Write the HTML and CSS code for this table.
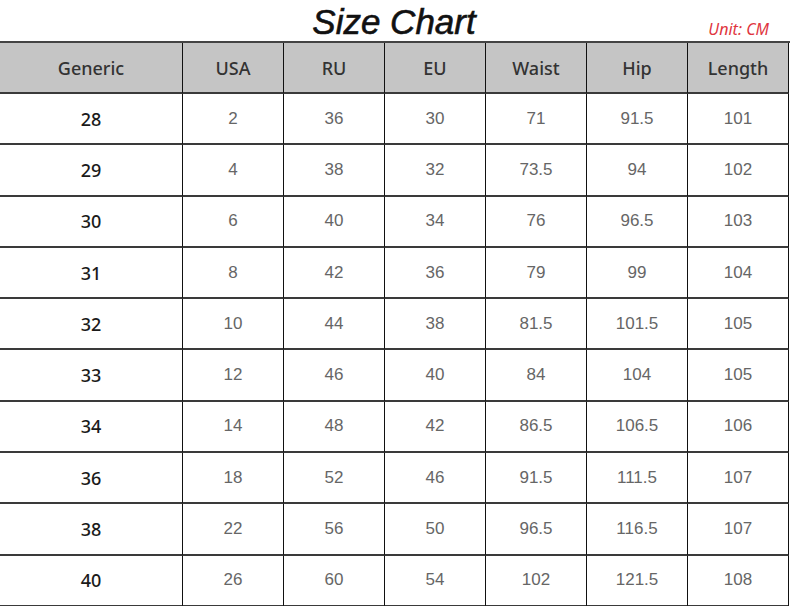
FILE: index.html
```html
<!DOCTYPE html>
<html>
<head>
<meta charset="utf-8">
<link rel="stylesheet" href="styles.css">
</head>
<body>
<div class="chart">
  <div class="title-row">
    <span class="title">Size Chart</span>
    <span class="unit">Unit: CM</span>
  </div>
  <div class="grid">
    <div class="h">Generic</div><div class="h">USA</div><div class="h">RU</div><div class="h">EU</div><div class="h">Waist</div><div class="h">Hip</div><div class="h">Length</div>
    <div class="g">28</div><div class="c">2</div><div class="c">36</div><div class="c">30</div><div class="c">71</div><div class="c">91.5</div><div class="c">101</div>
    <div class="g">29</div><div class="c">4</div><div class="c">38</div><div class="c">32</div><div class="c">73.5</div><div class="c">94</div><div class="c">102</div>
    <div class="g">30</div><div class="c">6</div><div class="c">40</div><div class="c">34</div><div class="c">76</div><div class="c">96.5</div><div class="c">103</div>
    <div class="g">31</div><div class="c">8</div><div class="c">42</div><div class="c">36</div><div class="c">79</div><div class="c">99</div><div class="c">104</div>
    <div class="g">32</div><div class="c">10</div><div class="c">44</div><div class="c">38</div><div class="c">81.5</div><div class="c">101.5</div><div class="c">105</div>
    <div class="g">33</div><div class="c">12</div><div class="c">46</div><div class="c">40</div><div class="c">84</div><div class="c">104</div><div class="c">105</div>
    <div class="g">34</div><div class="c">14</div><div class="c">48</div><div class="c">42</div><div class="c">86.5</div><div class="c">106.5</div><div class="c">106</div>
    <div class="g">36</div><div class="c">18</div><div class="c">52</div><div class="c">46</div><div class="c">91.5</div><div class="c">111.5</div><div class="c">107</div>
    <div class="g">38</div><div class="c">22</div><div class="c">56</div><div class="c">50</div><div class="c">96.5</div><div class="c">116.5</div><div class="c">107</div>
    <div class="g">40</div><div class="c">26</div><div class="c">60</div><div class="c">54</div><div class="c">102</div><div class="c">121.5</div><div class="c">108</div>
  </div>
</div>
</body>
</html>
```
FILE: styles.css
```css
html, body {
  margin: 0;
  padding: 0;
  background: #fff;
}
.chart {
  width: 790px;
  height: 606px;
  font-family: "Noto Sans", "Open Sans", sans-serif;
}
.title-row {
  height: 41px;
  box-sizing: border-box;
  display: flex;
  align-items: flex-start;
  justify-content: center;
  padding-top: 3px;
  padding-right: 2px;
  position: relative;
}
.title {
  font-family: "Liberation Sans", Arial, sans-serif;
  font-style: italic;
  font-size: 35px;
  line-height: 37px;
  color: #111;
  -webkit-text-stroke: 0.6px #111;
}
.unit {
  position: absolute;
  right: 21px;
  bottom: 1px;
  font-family: "Noto Sans", sans-serif;
  font-style: italic;
  font-size: 16px;
  color: #e03540;
}
.grid {
  display: grid;
  grid-template-columns: 183px repeat(6, 101px);
  grid-template-rows: 51px repeat(10, 51.3px);
  border-top: 2px solid #444;
  box-sizing: border-box;
  width: 790px;
}
.grid > div {
  display: flex;
  align-items: center;
  justify-content: center;
  border-right: 1px solid #111;
  border-bottom: 2px solid #3a3a3a;
  box-sizing: border-box;
}
.h {
  background: #c5c5c5;
  font-size: 18px;
  font-weight: 500;
  color: #333;
}
.g {
  font-size: 18px;
  font-weight: 500;
  color: #1a1a1a;
}
.c {
  font-family: "Liberation Sans", Arial, sans-serif;
  font-size: 17px;
  color: #666;
  font-weight: 300;
}
```
